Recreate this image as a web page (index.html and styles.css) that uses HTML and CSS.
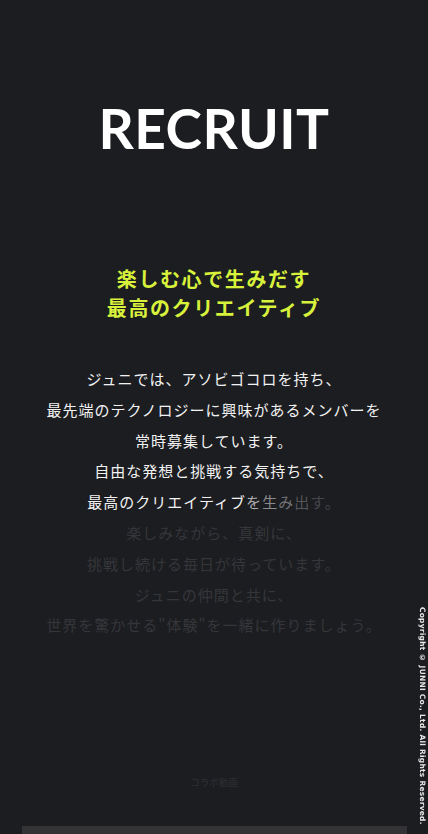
FILE: index.html
```html
<!DOCTYPE html>
<html lang="ja">
<head>
    <meta charset="UTF-8">
    <meta name="viewport" content="width=device-width, initial-scale=1.0">
    <title>RECRUIT</title>
    <link rel="stylesheet" href="styles.css">
</head>
<body>
    <main class="recruit">
        <h1 class="recruit-title">RECRUIT</h1>

        <h2 class="catch">楽しむ心で生みだす<br>最高のクリエイティブ</h2>

        <p class="message">
            <span class="line">ジュニでは、アソビゴコロを持ち、</span>
            <span class="line">最先端のテクノロジーに興味があるメンバーを</span>
            <span class="line">常時募集しています。</span>
            <span class="line">自由な発想と挑戦する気持ちで、</span>
            <span class="line">最高のクリエイティブ<span class="f1">を</span><span class="f2">生</span><span class="f3">み</span><span class="f4">出</span><span class="f5">す。</span></span>
            <span class="line dim">楽しみながら、真剣に、</span>
            <span class="line dim">挑戦し続ける毎日が待っています。</span>
            <span class="line dim">ジュニの仲間と共に、</span>
            <span class="line dim">世界を驚かせる"体験"を一緒に作りましょう。</span>
        </p>

        <p class="movie-label">コラボ動画</p>
        <div class="movie"></div>
    </main>

    <p class="copyright">Copyright © JUNNI Co., Ltd. All Rights Reserved.</p>
</body>
</html>
```

FILE: styles.css
```css
* {
    margin: 0;
    padding: 0;
    box-sizing: border-box;
}

body {
    background: #1c1d21;
    color: #fff;
    font-family: "Noto Sans CJK JP", "Noto Sans", sans-serif;
    height: 100vh;
    overflow: hidden;
}

.recruit {
    display: flex;
    flex-direction: column;
    align-items: center;
    padding-top: 99px;
}

.recruit-title {
    font-family: Lato, "Noto Sans", sans-serif;
    font-weight: 700;
    font-size: 55px;
    line-height: 58px;
    letter-spacing: 0.5px;
    color: #fff;
}

.catch {
    margin-top: 107px;
    color: #d8f23c;
    font-size: 20px;
    font-weight: 700;
    line-height: 29px;
    letter-spacing: 1.6px;
    text-align: center;
}

.message {
    margin-top: 42px;
    font-size: 15px;
    line-height: 30.8px;
    letter-spacing: 1px;
    text-align: center;
    color: #f2f2f2;
}

.line {
    display: block;
}

.dim {
    color: #35363a;
}

.f1 { color: #b0b0b2; }
.f2 { color: #8a8a8d; }
.f3 { color: #717174; }
.f4 { color: #55565a; }
.f5 { color: #45464a; }

.movie-label {
    margin-top: 134px;
    font-size: 9.5px;
    letter-spacing: 0;
    color: #2f3034;
}

.movie {
    margin-top: 37px;
    width: 385px;
    height: 200px;
    background: #333335;
}

.copyright {
    position: fixed;
    right: 1px;
    bottom: 9px;
    writing-mode: vertical-rl;
    font-family: "DejaVu Sans", sans-serif;
    font-size: 7.4px;
    font-weight: 700;
    letter-spacing: 0.3px;
    color: #e6e6e6;
}
```
